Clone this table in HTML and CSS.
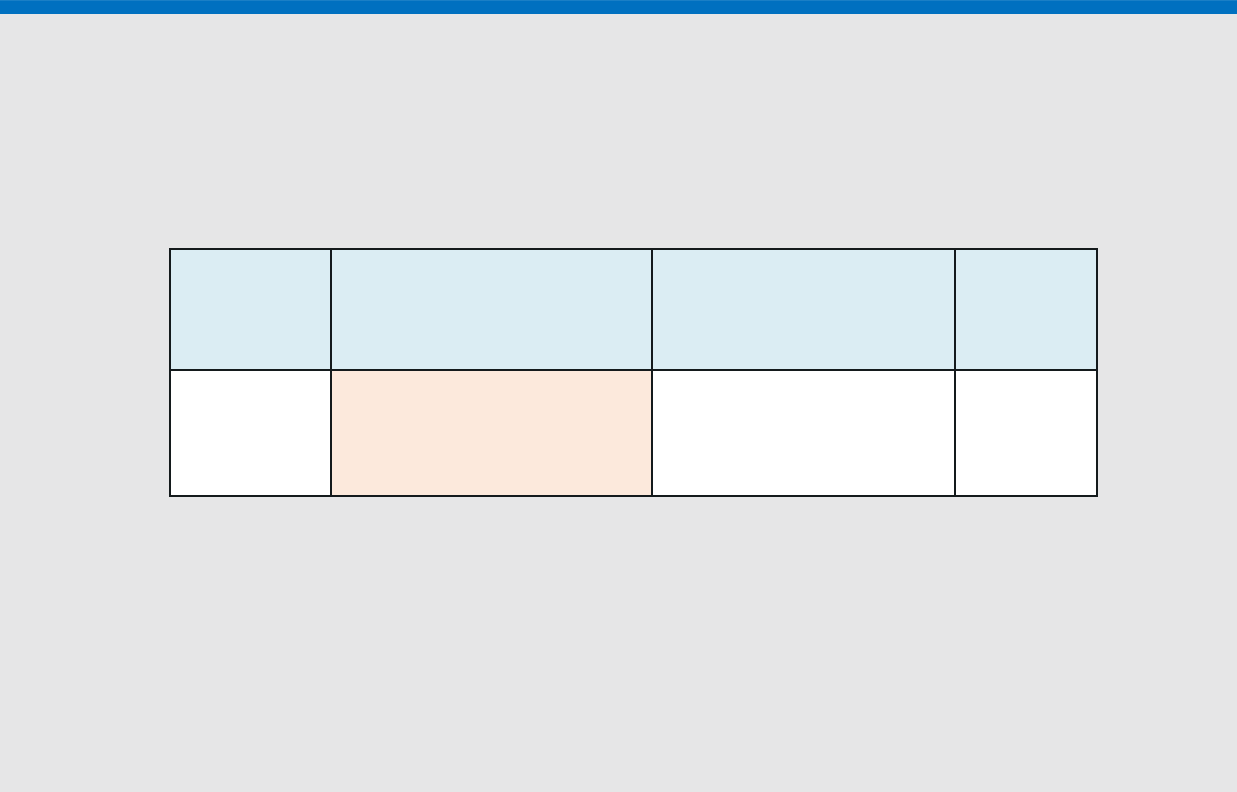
FILE: index.html
```html
<!DOCTYPE html>
<html lang="en">
<head>
    <meta charset="UTF-8">
    <meta name="viewport" content="width=device-width, initial-scale=1.0">
    <title>Table</title>
    <link rel="stylesheet" href="styles.css">
</head>
<body>

    <div class="top-bar"></div>

    <div class="page">
        <div class="grid-table">
            <div class="cell head"></div>
            <div class="cell head"></div>
            <div class="cell head"></div>
            <div class="cell head"></div>

            <div class="cell"></div>
            <div class="cell mark"></div>
            <div class="cell"></div>
            <div class="cell"></div>
        </div>
    </div>

</body>
</html>
```

FILE: styles.css
```css
body {
    margin: 0;
    font-family: "Liberation Sans", Arial, sans-serif;
    background-color: #e6e6e7;
    min-height: 792px;
}
.top-bar {
    height: 13px;
    background-color: #0070c0;
    border-top: 1px solid #1a7fc6;
}
.page {
    padding: 234px 0 0 169px;
}
.grid-table {
    display: grid;
    grid-template-columns: 159px 319px 301px 140px;
    grid-template-rows: 119px 124px;
    gap: 2px;
    padding: 2px;
    background-color: #141a1c;
    width: max-content;
}
.cell {
    background-color: #fff;
}
.cell.head {
    background-color: #dbedf3;
}
.cell.mark {
    background-color: #fce9dc;
}
```
